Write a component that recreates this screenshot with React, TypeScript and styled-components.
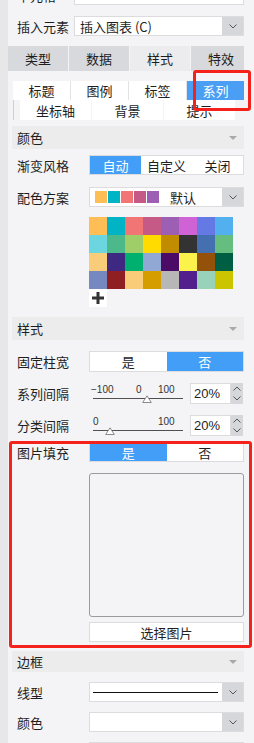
import React from "react";
import styled, { createGlobalStyle } from "styled-components";

const GlobalStyle = createGlobalStyle`
  html, body {
    margin: 0;
    padding: 0;
    background: #f4f4f6;
    overflow: hidden;
  }
  body {
    font-family: "Noto Sans CJK SC", "Noto Sans", sans-serif;
    font-size: 13px;
    color: #1e1e1e;
  }
`;

const Page = styled.div`
  display: flex;
  width: 254px;
  height: 743px;
  overflow: hidden;
`;

const LeftStrip = styled.div`
  width: 8px;
  flex-shrink: 0;
  background: #e7e7e9;
`;

const Panel = styled.div`
  width: 236px;
  display: flex;
  flex-direction: column;

  & > * {
    flex-shrink: 0;
  }
`;

const Row = styled.div<{ $top: number; $h?: number }>`
  display: flex;
  align-items: center;
  margin-left: 4px;
  margin-top: ${({ $top }) => $top}px;
  height: ${({ $h }) => $h ?? 20}px;
`;

const Label = styled.div<{ $w?: number }>`
  width: ${({ $w }) => $w ?? 77}px;
  padding-left: 5px;
  box-sizing: border-box;
  flex-shrink: 0;
  line-height: 1;
  white-space: nowrap;
`;

const Select = styled.div`
  flex: 1;
  height: 100%;
  display: flex;
  background: #fff;
  border: 1px solid #dcdcde;
  box-sizing: border-box;
`;

const SelectText = styled.div`
  flex: 1;
  display: flex;
  align-items: center;
  padding-left: 5px;
  font-size: 13px;
  white-space: nowrap;
  overflow: hidden;
`;

const DropBtn = styled.div`
  width: 21px;
  display: flex;
  align-items: center;
  justify-content: center;
  background: #d6d7db;
`;

const Tabs = styled.div`
  display: grid;
  grid-template-columns: repeat(4, 60px);
  gap: 1px;
  margin-top: 10px;
  height: 25px;
  overflow: hidden;
`;

const Tab = styled.div<{ $active?: boolean }>`
  display: flex;
  align-items: center;
  justify-content: center;
  background: ${({ $active }) => ($active ? "#ececee" : "#d8d9dd")};
  font-size: 13px;
`;

const SubTabs = styled.div`
  position: relative;
  margin-left: 5px;
  margin-top: 10px;
  width: 231px;
`;

const SubRow1 = styled.div`
  display: grid;
  grid-template-columns: repeat(4, 1fr);
  gap: 1px;
  height: 19px;
  background: #e3e3e6;
`;

const SubRow2 = styled.div`
  display: grid;
  grid-template-columns: repeat(3, 71px);
  gap: 1px;
  height: 20px;
  padding-left: 6px;
  border-left: 1px solid #cfcfd2;
`;

const SubTab = styled.div<{ $active?: boolean }>`
  display: flex;
  align-items: center;
  justify-content: center;
  background: ${({ $active }) => ($active ? "#4a9ff5" : "#fff")};
  color: ${({ $active }) => ($active ? "#fff" : "#1e1e1e")};
  font-size: 13px;
`;

const Highlight = styled.div`
  position: absolute;
  border: 3px solid #f5211b;
  border-radius: 3px;
  box-sizing: border-box;
  pointer-events: none;
`;

const SectionHeader = styled.div<{ $top: number; $h?: number }>`
  display: flex;
  align-items: center;
  justify-content: space-between;
  margin-left: 4px;
  margin-top: ${({ $top }) => $top}px;
  height: ${({ $h }) => $h ?? 23}px;
  padding: 0 7px 0 5px;
  background: #ececec;
  font-size: 13px;
`;

const Caret = styled.div`
  width: 0;
  height: 0;
  border-left: 4px solid transparent;
  border-right: 4px solid transparent;
  border-top: 4px solid #a9a9ab;
`;

const Segmented = styled.div`
  flex: 1;
  height: 100%;
  display: flex;
  background: #fff;
  border: 1px solid #dcdcde;
  box-sizing: border-box;
`;

const Segment = styled.div<{ $active?: boolean }>`
  flex: 1;
  display: flex;
  align-items: center;
  justify-content: center;
  background: ${({ $active }) => ($active ? "#439ef7" : "transparent")};
  color: ${({ $active }) => ($active ? "#fff" : "#1e1e1e")};
  font-size: 13px;
`;

const Swatch = styled.span<{ $c: string }>`
  width: 12px;
  height: 12px;
  margin-right: 1px;
  background: ${({ $c }) => $c};
  flex-shrink: 0;
`;

const SwatchName = styled.span`
  margin-left: 10px;
`;

const Palette = styled.div`
  display: grid;
  grid-template-columns: repeat(8, 18px);
  grid-auto-rows: 18px;
  margin-left: 81px;
  margin-top: 10px;
`;

const Cell = styled.div<{ $c: string }>`
  background: ${({ $c }) => $c};
`;

const AddBtn = styled.div`
  width: 18px;
  height: 18px;
  margin-left: 81px;
  background: #fff;
  display: flex;
  align-items: center;
  justify-content: center;
`;

const SliderBox = styled.div`
  position: relative;
  width: 94px;
  height: 100%;
  flex-shrink: 0;
`;

const Tick = styled.span`
  position: absolute;
  top: 2px;
  font-family: "Liberation Sans", Arial, sans-serif;
  font-size: 10px;
  line-height: 10px;
  color: #333;
`;

const Track = styled.div`
  position: absolute;
  left: 4px;
  width: 90px;
  top: 15px;
  height: 1px;
  background: #505050;
`;

const Thumb = styled.svg`
  position: absolute;
  top: 12px;
`;

const NumInput = styled.div`
  margin-left: 7px;
  width: 41px;
  height: 100%;
  background: #fff;
  border: 1px solid #dcdcde;
  box-sizing: border-box;
  display: flex;
  align-items: center;
  padding-left: 3px;
  font-family: "Liberation Sans", Arial, sans-serif;
  font-size: 13px;
`;

const Spinner = styled.div`
  width: 12px;
  height: 100%;
  background: #d6d7db;
  display: flex;
  flex-direction: column;
  align-items: center;
  justify-content: space-around;
`;

const FillGroup = styled.div`
  position: relative;
  margin-top: 6px;
  display: flex;
  flex-direction: column;
`;

const ImageBox = styled.div`
  margin-left: 81px;
  margin-top: 11px;
  height: 144px;
  border: 1px solid #9b9b9d;
  border-radius: 3px;
  box-sizing: border-box;
`;

const PickBtn = styled.div`
  margin-left: 81px;
  margin-top: 5px;
  height: 20px;
  background: #fff;
  border: 1px solid #dcdcde;
  box-sizing: border-box;
  display: flex;
  align-items: center;
  justify-content: center;
  font-size: 13px;
`;

const LineSample = styled.div`
  flex: 1;
  margin: 0 4px 0 3px;
  height: 1px;
  align-self: center;
  background: #111;
`;

const Chevron = ({ up }: { up?: boolean }) => (
  <svg width="8" height="5" viewBox="0 0 8 5">
    <polyline
      points={up ? "0.5,4.5 4,1 7.5,4.5" : "0.5,0.5 4,4 7.5,0.5"}
      fill="none"
      stroke="#555"
      strokeWidth="1"
    />
  </svg>
);

const Dropdown = ({ children }: { children?: React.ReactNode }) => (
  <Select>
    {children ?? <SelectText />}
    <DropBtn>
      <Chevron />
    </DropBtn>
  </Select>
);

const paletteColors = [
  "#ffbe55", "#00b3c5", "#f17575", "#c65a86", "#9c5fb4", "#cf63d6", "#6479e4", "#52b0ef",
  "#6bd6e0", "#4cb98b", "#9fcd68", "#ffdb00", "#c18c00", "#333333", "#4470b1", "#65bd7f",
  "#f9cc79", "#3e2882", "#00b06f", "#91a8d5", "#4b0b66", "#fbf24b", "#93510a", "#005f42",
  "#7589c0", "#8f1f22", "#f9cc79", "#d69d00", "#b7b7b7", "#531f8c", "#98d3b9", "#cbc500",
];

type SliderProps = { ticks: { text: string; left: number }[]; thumb: number };

const Slider = ({ ticks, thumb }: SliderProps) => (
  <SliderBox>
    {ticks.map((t) => (
      <Tick key={t.text} style={{ left: t.left }}>
        {t.text}
      </Tick>
    ))}
    <Track />
    <Thumb width="10" height="8" viewBox="0 0 10 8" style={{ left: thumb - 5 }}>
      <polygon points="5,0.8 9.3,7.5 0.7,7.5" fill="#fff" stroke="#8a8a8a" strokeWidth="1" />
    </Thumb>
  </SliderBox>
);

const NumberField = ({ value }: { value: string }) => (
  <>
    <NumInput>{value}</NumInput>
    <Spinner>
      <Chevron up />
      <Chevron />
    </Spinner>
  </>
);

export default function App() {
  return (
    <>
      <GlobalStyle />
      <Page>
        <LeftStrip />
        <Panel>
          <Row $top={-15}>
            <Label $w={62}>单元格</Label>
            <Select />
          </Row>
          <Row $top={11}>
            <Label $w={62}>插入元素</Label>
            <Dropdown>
              <SelectText>插入图表 (C)</SelectText>
            </Dropdown>
          </Row>

          <Tabs>
            <Tab>类型</Tab>
            <Tab>数据</Tab>
            <Tab $active>样式</Tab>
            <Tab>特效</Tab>
          </Tabs>

          <SubTabs>
            <SubRow1>
              <SubTab>标题</SubTab>
              <SubTab>图例</SubTab>
              <SubTab>标签</SubTab>
              <SubTab $active>系列</SubTab>
            </SubRow1>
            <SubRow2>
              <SubTab>坐标轴</SubTab>
              <SubTab>背景</SubTab>
              <SubTab>提示</SubTab>
            </SubRow2>
            <Highlight style={{ left: 180, top: -11, width: 58, height: 41 }} />
          </SubTabs>

          <SectionHeader $top={6}>
            颜色
            <Caret />
          </SectionHeader>
          <Row $top={6}>
            <Label>渐变风格</Label>
            <Segmented>
              <Segment $active>自动</Segment>
              <Segment>自定义</Segment>
              <Segment>关闭</Segment>
            </Segmented>
          </Row>
          <Row $top={12}>
            <Label>配色方案</Label>
            <Dropdown>
              <SelectText>
                {paletteColors.slice(0, 5).map((c, i) => (
                  <Swatch key={i} $c={c} />
                ))}
                <SwatchName>默认</SwatchName>
              </SelectText>
            </Dropdown>
          </Row>
          <Palette>
            {paletteColors.map((c, i) => (
              <Cell key={i} $c={c} />
            ))}
          </Palette>
          <AddBtn>
            <svg width="12" height="12" viewBox="0 0 12 12">
              <rect x="0" y="4.5" width="12" height="3" fill="#333" />
              <rect x="4.5" y="0" width="3" height="12" fill="#333" />
            </svg>
          </AddBtn>

          <SectionHeader $top={10}>
            样式
            <Caret />
          </SectionHeader>
          <Row $top={11} $h={21}>
            <Label>固定柱宽</Label>
            <Segmented>
              <Segment>是</Segment>
              <Segment $active>否</Segment>
            </Segmented>
          </Row>
          <Row $top={11} $h={21}>
            <Label>系列间隔</Label>
            <Slider
              ticks={[
                { text: "−100", left: 2 },
                { text: "0", left: 47 },
                { text: "100", left: 69 },
              ]}
              thumb={58}
            />
            <NumberField value="20%" />
          </Row>
          <Row $top={11} $h={21}>
            <Label>分类间隔</Label>
            <Slider
              ticks={[
                { text: "0", left: 4 },
                { text: "100", left: 69 },
              ]}
              thumb={21}
            />
            <NumberField value="20%" />
          </Row>

          <FillGroup>
            <Row $top={0}>
              <Label>图片填充</Label>
              <Segmented>
                <Segment $active>是</Segment>
                <Segment>否</Segment>
              </Segmented>
            </Row>
            <ImageBox />
            <PickBtn>选择图片</PickBtn>
            <Highlight style={{ left: 1, top: -1, right: -8, bottom: -6 }} />
          </FillGroup>

          <SectionHeader $top={9} $h={21}>
            边框
            <Caret />
          </SectionHeader>
          <Row $top={10}>
            <Label>线型</Label>
            <Dropdown>
              <LineSample />
            </Dropdown>
          </Row>
          <Row $top={10}>
            <Label>颜色</Label>
            <Dropdown />
          </Row>
          <Row $top={10}>
            <Label />
            <Dropdown />
          </Row>
        </Panel>
      </Page>
    </>
  );
}
